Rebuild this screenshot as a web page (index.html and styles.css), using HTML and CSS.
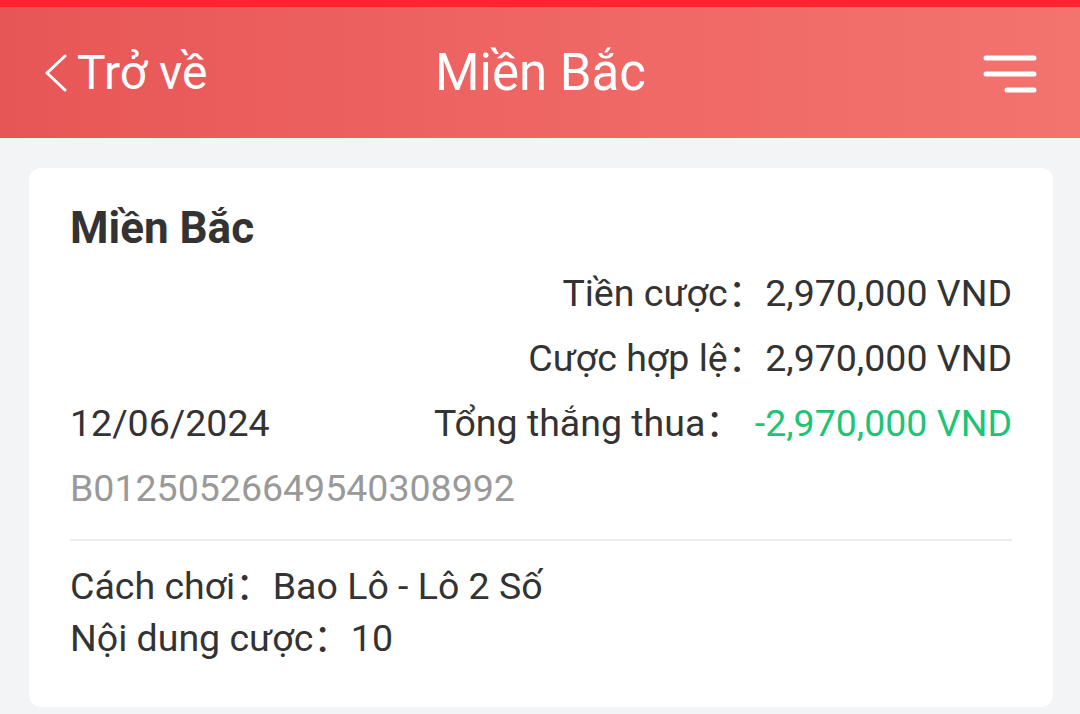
FILE: index.html
```html
<!DOCTYPE html>
<html lang="vi">
<head>
<meta charset="utf-8">
<title>Miền Bắc</title>
<link rel="stylesheet" href="styles.css">
</head>
<body>
<header class="topbar">
  <div class="back">
    <svg class="chev" width="24" height="38" viewBox="0 0 24 38"><polyline points="21,2 3,19 21,36" fill="none" stroke="#fff" stroke-width="3" stroke-linecap="round" stroke-linejoin="round"/></svg>
    <span>Trở về</span>
  </div>
  <div class="title">Miền Bắc</div>
  <div class="menu-wrap">
    <svg class="menu" width="54" height="38" viewBox="0 0 54 38"><g stroke="#fff" stroke-width="5" stroke-linecap="round"><line x1="3" y1="3" x2="51" y2="3"/><line x1="3" y1="19" x2="51" y2="19"/><line x1="24" y1="35" x2="51" y2="35"/></g></svg>
  </div>
</header>
<main class="page">
  <section class="card">
    <h1 class="card-title">Miền Bắc</h1>
    <div class="row right"><span class="lbl">Tiền cược：</span><span class="val">2,970,000 VND</span></div>
    <div class="row right"><span class="lbl">Cược hợp lệ：</span><span class="val">2,970,000 VND</span></div>
    <div class="row split"><span class="date">12/06/2024</span><span class="pair"><span class="lbl">Tổng thắng thua：</span><span class="val green">-2,970,000 VND</span></span></div>
    <div class="row id">B01250526649540308992</div>
    <div class="divider"></div>
    <div class="line"><span class="lbl">Cách chơi：</span><span>Bao Lô - Lô 2 Số</span></div>
    <div class="line"><span class="lbl">Nội dung cược：</span><span>10</span></div>
  </section>
</main>
</body>
</html>
```
FILE: styles.css
```css
html, body {
  margin: 0;
  padding: 0;
}
body {
  background: #f3f4f6;
  font-family: Roboto, "Noto Sans CJK SC", sans-serif;
  color: #333333;
  width: 1080px;
  height: 714px;
  overflow: hidden;
}
.topbar {
  box-sizing: border-box;
  height: 138px;
  border-top: 7px solid #ff2430;
  background: linear-gradient(90deg, #e75656 0%, #ee6664 50%, #f3736f 100%);
  display: flex;
  align-items: center;
  padding: 0 43px 0 44px;
  color: #ffffff;
}
.back {
  display: flex;
  align-items: center;
  gap: 9px;
  font-size: 48px;
  width: 300px;
}
.chev {
  display: block;
}
.title {
  font-size: 51px;
  text-align: center;
  flex: 1;
}
.menu-wrap {
  width: 300px;
  display: flex;
  justify-content: flex-end;
}
.menu {
  display: block;
  margin-top: 2px;
}
.page {
  padding: 30px 27px 0 29px;
}
.card {
  background: #ffffff;
  border-radius: 12px;
  padding: 35px 41px 43px 41px;
}
.card-title {
  margin: 0 0 8px 0;
  font-size: 44px;
  font-weight: 700;
  line-height: 50px;
  color: #333333;
}
.row {
  font-size: 37.5px;
  line-height: 65px;
  display: flex;
}
.right {
  justify-content: flex-end;
}
.split {
  justify-content: space-between;
}
.pair {
  display: flex;
}
.green {
  color: #1dc476;
  margin-left: 12px;
}
.id {
  color: #999999;
}
.divider {
  height: 2px;
  background: #ececec;
  margin: 18px 0 19px 0;
}
.line {
  font-size: 37.5px;
  line-height: 52px;
  display: flex;
}
```
